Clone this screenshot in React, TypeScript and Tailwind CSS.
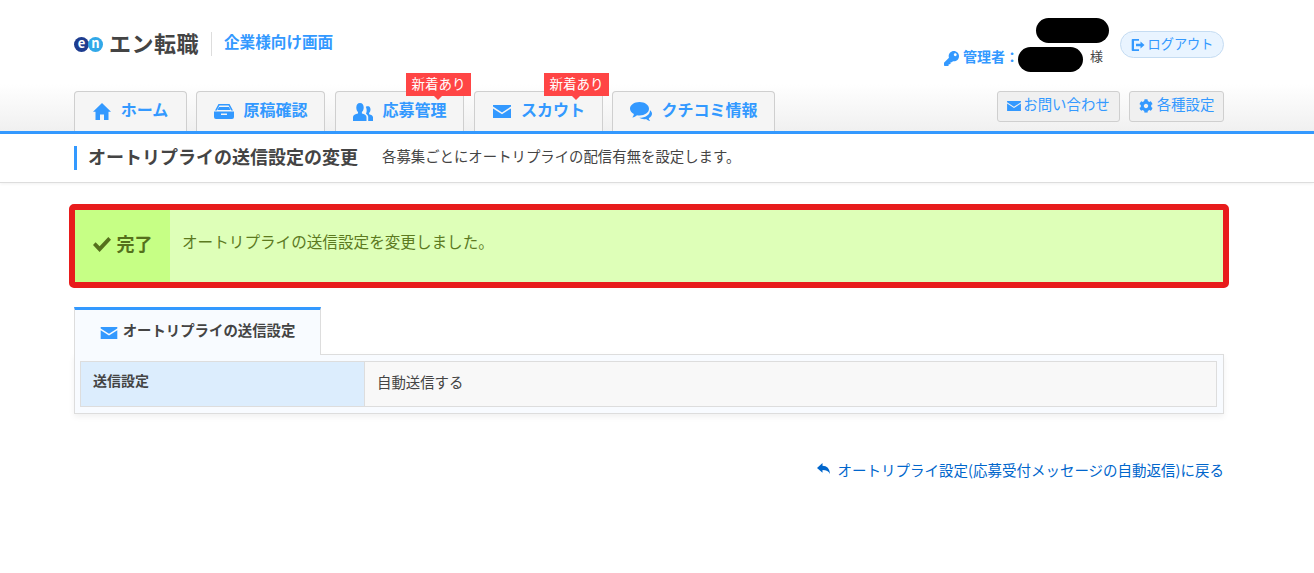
import React from "react";
import { FaCog, FaKey } from "react-icons/fa";

const font = "font-['Noto_Sans_CJK_JP','Noto_Sans',sans-serif]";

const Envelope = ({ className }: { className?: string }) => (
  <svg viewBox="0 0 18 13" className={className} fill="currentColor">
    <path d="M0 0h18v1.6L9 7.4 0 1.6z" />
    <path d="M0 3.4l9 5.8 9-5.8V13H0z" />
  </svg>
);

const Home = ({ className }: { className?: string }) => (
  <svg viewBox="0 0 18 17" className={className} fill="currentColor">
    <path d="M9 0l9 8.700h-2.500V17H11v-5.500H7V17H2.500V8.700H0z" />
  </svg>
);

const Tray = ({ className }: { className?: string }) => (
  <svg viewBox="0 0 20 15" className={className} fill="currentColor">
    <path d="M4.500 0h11L19 6.500h-1.700L14.600 1.600H5.400L2.700 6.500H1z" />
    <path d="M5 3h10l1.600 3H3.400z" />
    <path d="M0 7.500h20V13a2 2 0 0 1-2 2H2a2 2 0 0 1-2-2zM7 9.600v1.300h6V9.600z" fillRule="evenodd" />
  </svg>
);

const People = ({ className }: { className?: string }) => (
  <svg viewBox="0 0 20 18" className={className} fill="currentColor">
    <path d="M7 0c2.400 0 3.700 2 3.700 4.400 0 1.900-.8 3.600-1.800 4.500v1.500c2.400.8 4.600 1.600 4.600 3.600V18H0v-4c0-2 2.400-2.800 5-3.600V8.900C4 8 3.300 6.300 3.300 4.400 3.300 2 4.600 0 7 0z" />
    <path d="M14.500 3c2 0 3 1.600 3 3.500 0 1.500-.6 2.800-1.400 3.500v1.200c2 .6 3.900 1.300 3.900 3V18h-4.800v-4c0-1.500-.9-2.500-2.200-3.300.5-1.200.8-2.800.6-4.300-.1-1.100-.4-1.800-.8-2.400.5-.6 1.500-1 2.700-1z" />
  </svg>
);

const Comments = ({ className }: { className?: string }) => (
  <svg viewBox="0 0 22 19" className={className} fill="currentColor">
    <path d="M9.500 0C14.700 0 19 2.900 19 6.700s-4.300 6.700-9.500 6.700c-.9 0-1.700-.1-2.500-.2-1.300 1.100-2.800 1.900-4.700 2.300.8-1 1.400-2.100 1.600-3.500C1.600 10.800 0 8.900 0 6.700 0 2.900 4.300 0 9.500 0z" />
    <path d="M20 8.200c1.300 1 2 2.200 2 3.600 0 1.900-1.300 3.500-3.200 4.400.2 1 .7 1.900 1.400 2.800-1.700-.3-3-1-4.100-2-.6.100-1.200.2-1.900.2-1.900 0-3.600-.5-4.900-1.400 5.800.1 10.700-2.800 10.700-7.600z" />
  </svg>
);

const SignOut = ({ className }: { className?: string }) => (
  <svg viewBox="0 0 14 14" className={className} fill="currentColor">
    <path d="M1.500 1H8v1.700H3v8.600h5V13H1.500a.8.800 0 0 1-.8-.8V1.800A.8.800 0 0 1 1.500 1z" />
    <path d="M9.500 3.600L13.500 7l-4 3.400V8.300H5V5.700h4.500z" />
  </svg>
);

const ReplyArrow = ({ className }: { className?: string }) => (
  <svg viewBox="0 0 13 11" className={className} fill="currentColor">
    <path d="M5.500 0v2.800C10 2.800 12.600 5.500 13 11c-1.200-2.900-3.500-4-7.500-4v2.800L0 4.900z" />
  </svg>
);

const Check = ({ className }: { className?: string }) => (
  <svg viewBox="0 0 18 15" className={className} fill="currentColor">
    <path d="M0 8l2.600-2.700 4 4L15.300 0 18 2.700 6.600 15z" />
  </svg>
);

function NavTab({
  label,
  icon,
  width,
  badgeLeft,
  gap,
}: {
  label: string;
  icon: React.ReactNode;
  width: string;
  badgeLeft?: string;
  gap: string;
}) {
  return (
    <div
      className={`relative h-10 flex items-center justify-center rounded-t border border-b-0 border-[#cfcfcf] bg-[#f5f5f5] text-[#3399ff] text-[16px] font-bold ${width} ${gap}`}
    >
      {icon}
      <span className="pb-[5px]">{label}</span>
      {badgeLeft && (
        <div
          className={`absolute -top-[19px] w-[65px] h-[23px] bg-[#ff4545] text-white text-[13.500px] font-normal flex items-center justify-center whitespace-nowrap ${badgeLeft}`}
        >
          <span className="pb-[2px]">新着あり</span>
          <span className="absolute left-[28px] -bottom-[4px] w-0 h-0 border-x-[4px] border-x-transparent border-t-[4px] border-t-[#ff4545]" />
        </div>
      )}
    </div>
  );
}

export default function App() {
  return (
    <div className={`${font} w-[1314px] h-[573px] bg-white overflow-hidden text-[#333]`}>
      <header className="h-[134px] border-b-[3px] border-[#3399ff] bg-gradient-to-b from-white from-[64%] to-[#f0f0f0]">
        <div className="w-[1150px] ml-[74px] h-[131px] flex flex-col">
          <div className="h-[91px] flex justify-between">
            <div className="flex items-center h-[28px] mt-[30px]">
              <div className="flex">
                <span className="w-[15px] h-[15px] rounded-full bg-[#1d3c8f] text-white text-[13px] leading-[12px] font-bold text-center">e</span>
                <span className="w-[15px] h-[15px] -ml-[1px] rounded-full bg-[#31a8e8] text-white text-[13px] leading-[12px] font-bold text-center">n</span>
              </div>
              <span className="ml-[6px] pb-[3px] text-[22px] font-bold text-[#444] whitespace-nowrap tracking-[0.5px]">エン転職</span>
              <div className="ml-[12px] w-px h-[24px] bg-[#ddd]" />
              <span className="ml-[12px] pb-[5px] text-[15.600px] font-bold text-[#3399ff]">企業様向け画面</span>
            </div>
            <div className="flex items-start">
              <div className="flex flex-col items-end mr-[11px]">
                <div className="w-[73px] h-[25px] mt-[18px] rounded-full bg-black" />
                <div className="flex items-center mt-[4px] h-[25px] mr-[6px]">
                  <FaKey className="text-[#3399ff] w-[15px] h-[15px] -mt-[2px] -ml-[1px]" />
                  <span className="ml-[4px] pb-[7px] text-[14px] font-bold text-[#3399ff]">管理者：</span>
                  <div className="w-[65px] h-[25px] -ml-[1px] rounded-full bg-black" />
                  <span className="ml-[7px] pb-[7px] text-[13px] text-[#444]">様</span>
                </div>
              </div>
              <div className="mt-[31px] w-[104px] h-[27px] rounded-[14px] border border-[#c5dcf2] bg-[#e9f4ff] flex items-center justify-center gap-[3px] text-[#3399ff] text-[13.200px]">
                <SignOut className="w-[14px] h-[14px]" />
                <span className="pb-[2px]">ログアウト</span>
              </div>
            </div>
          </div>
          <div className="flex justify-between h-10">
            <nav className="flex">
              <NavTab label="ホーム" width="w-[113px]" gap="gap-[10px]" icon={<Home className="w-[18px] h-[17px]" />} />
              <NavTab label="原稿確認" width="w-[129px] ml-[9px] pl-[1px]" gap="gap-[9px]" icon={<Tray className="w-[20px] h-[15px]" />} />
              <NavTab label="応募管理" width="w-[129px] ml-[10px] pl-[1px]" gap="gap-[9px]" badgeLeft="left-[70px]" icon={<People className="w-[20px] h-[18px]" />} />
              <NavTab label="スカウト" width="w-[129px] ml-[10px] pl-[1px]" gap="gap-[10px]" badgeLeft="left-[69px]" icon={<Envelope className="w-[18px] h-[13px]" />} />
              <NavTab label="クチコミ情報" width="w-[163px] ml-[9px] pl-[1px]" gap="gap-[9px]" icon={<Comments className="w-[22px] h-[19px]" />} />
            </nav>
            <div className="flex gap-[9px]">
              <div className="w-[123px] h-[31px] rounded-[3px] border border-[#cfcfcf] bg-[#f0f0f0] flex items-center justify-center gap-[2px] text-[#3399ff] text-[14.400px]">
                <Envelope className="w-[14px] h-[10px] -mt-[2px]" />
                <span className="pb-[5px]">お問い合わせ</span>
              </div>
              <div className="w-[95px] h-[31px] rounded-[3px] border border-[#cfcfcf] bg-[#f0f0f0] flex items-center justify-center gap-[4px] text-[#3399ff] text-[14.400px]">
                <FaCog className="w-[14px] h-[14px] -mt-[2px]" />
                <span className="pb-[5px]">各種設定</span>
              </div>
            </div>
          </div>
        </div>
      </header>

      <div className="h-[49px] border-b border-[#dddddd] shadow-[0_1px_3px_rgba(0,0,0,0.06)]">
        <div className="w-[1150px] ml-[74px] h-full flex items-center">
          <div className="w-[3px] h-[24px] bg-[#3399ff]" />
          <h1 className="ml-[11px] pb-[4px] text-[18px] font-bold text-[#444]">オートリプライの送信設定の変更</h1>
          <p className="ml-[24px] pb-[4px] text-[14.400px] text-[#444]">各募集ごとにオートリプライの配信有無を設定します。</p>
        </div>
      </div>

      <main className="w-[1150px] ml-[74px]">
        <div className="mt-[21px] -mx-[5px] h-[84px] rounded-[5px] border-[6px] border-[#e81c1c] flex bg-[#deffb8] text-[#5c7a1f]">
          <div className="w-[95px] bg-[#c6ff85] flex items-center justify-center gap-[6px] text-[18px] font-bold text-[#55701c]">
            <Check className="w-[18px] h-[15px] -mt-[3px]" />
            <span className="pb-[6px]">完了</span>
          </div>
          <div className="flex items-center pl-[12px] pb-[8px] text-[15.600px]">オートリプライの送信設定を変更しました。</div>
        </div>

        <div className="mt-[19px] relative z-10 w-[247px] h-[48px] border-x border-[#dddddd] border-t-[3px] border-t-[#3399ff] bg-[#f8fbff] flex items-center justify-center gap-[5px] text-[14.400px] font-bold text-[#444]">
          <Envelope className="w-[18px] h-[12px] text-[#3399ff]" />
          <span className="pb-[5px]">オートリプライの送信設定</span>
        </div>
        <div className="-mt-px h-[60px] border border-[#dddddd] bg-[#f8fbff] pl-[5px] pr-[6px] pt-[6px] shadow-[0_3px_6px_rgba(0,0,0,0.06)]">
          <div className="h-[46px] border border-[#dddddd] flex text-[#444] text-[14px]">
            <div className="w-[284px] bg-[#dcedfd] border-r border-[#dddddd] pl-[12px] pt-[8px] font-bold">送信設定</div>
            <div className="flex-1 bg-[#f8f8f8] pl-[12px] pb-[4px] flex items-center text-[14.400px]">自動送信する</div>
          </div>
        </div>

        <div className="mt-[45px] flex justify-end items-center gap-[7px] text-[14.500px] text-[#0066cc]">
          <ReplyArrow className="w-[13px] h-[11px] -mt-[2px]" />
          <a>オートリプライ設定(応募受付メッセージの自動返信)に戻る</a>
        </div>
      </main>
    </div>
  );
}
